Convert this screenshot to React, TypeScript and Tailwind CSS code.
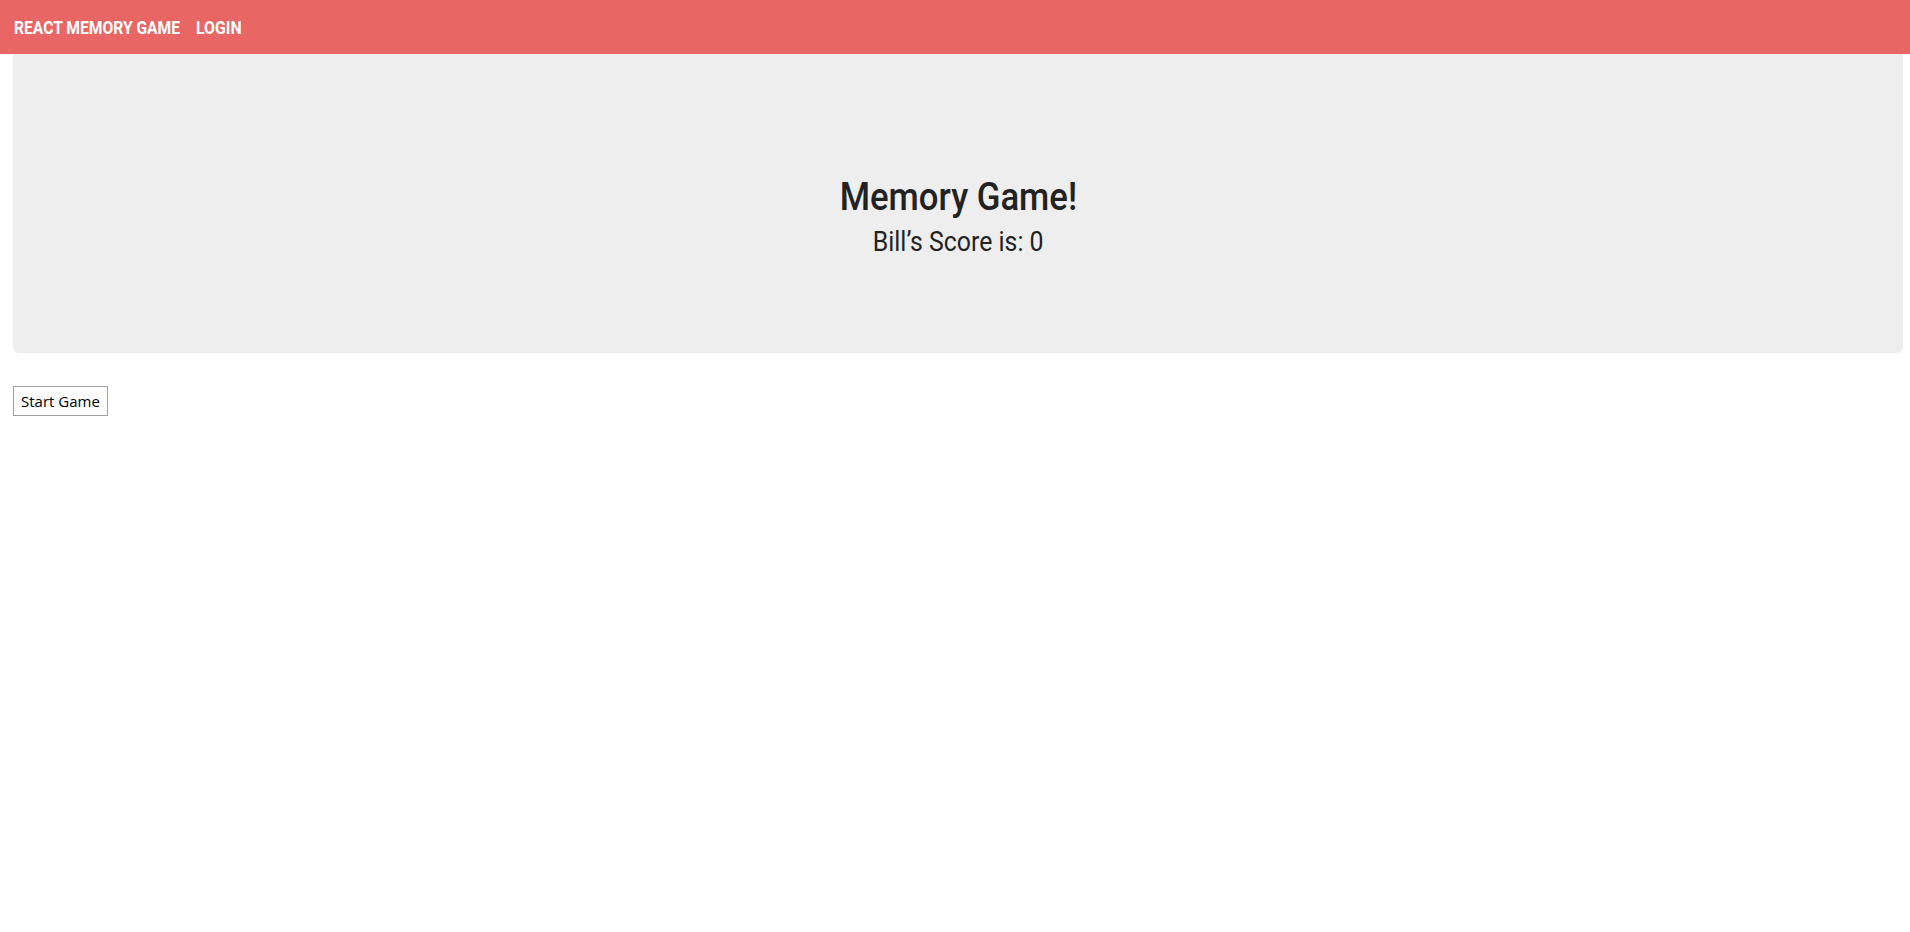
import React from "react";

export default function App() {
  const cond = { fontFamily: '"Roboto", "Liberation Sans", sans-serif' };
  return (
    <div className="min-h-[932px] bg-white">
      <nav className="h-[54px] bg-[#e86664] flex items-center px-[14px]" style={cond}>
        <span className="w-[182px] whitespace-nowrap">
          <span className="inline-block origin-left scale-x-[0.868] text-white font-bold text-[18px]">REACT MEMORY GAME</span>
        </span>
        <span className="w-[50px] whitespace-nowrap">
          <span className="inline-block origin-left scale-x-[0.88] text-white font-bold text-[18px]">LOGIN</span>
        </span>
      </nav>
      <div className="ml-[13px] mr-[7px] h-[299px] bg-[#eeeeee] rounded-b-[6px] flex flex-col items-center justify-center text-[#222222] pt-[26px]" style={cond}>
        <h1 className="text-[39px] leading-[44px] font-medium inline-block scale-x-[0.89]">Memory Game!</h1>
        <h2 className="text-[28px] leading-[32px] mt-[7px] inline-block scale-x-[0.888]">Bill’s Score is: 0</h2>
      </div>
      <div className="px-[13px] pt-[33px]">
        <button className="h-[30px] px-[7px] border border-[#a0a0a0] bg-[#fdfdfd] text-[15px] text-black" style={{ fontFamily: '"Open Sans", "Noto Sans", sans-serif' }}>
          Start Game
        </button>
      </div>
    </div>
  );
}
